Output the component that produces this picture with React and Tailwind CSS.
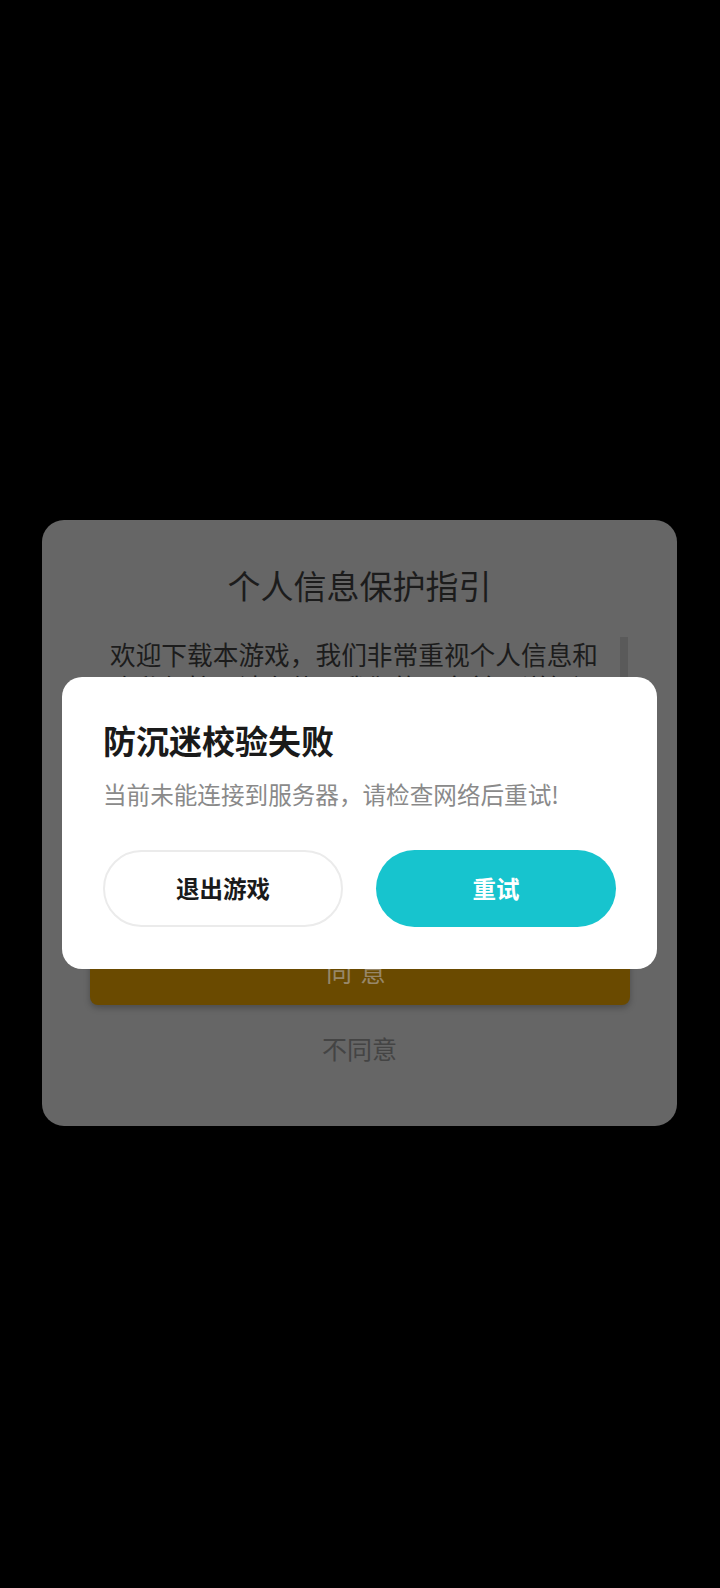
import React from 'react';

// only the two lines that show above the dialog
const bodyText = '欢迎下载本游戏，我们非常重视个人信息和隐私保护，请在使用我们的服务前，详细阅';

// Privacy guide card dimmed behind the anti-addiction error dialog
const App = () => {
  return (
    <div className="relative w-[720px] h-[1588px] bg-black overflow-hidden font-['Noto_Sans_CJK_SC',sans-serif]">
      <div className="relative mt-[520px] ml-[42px] w-[635px] h-[606px] rounded-[22px] bg-[#666666] flex flex-col">
        <h2 className="mt-[43px] text-center text-[33px] leading-[44px] text-[#1c1c1c]">
          个人信息保护指引
        </h2>

        <div className="relative mt-[30px] h-[280px] overflow-hidden">
          <p className="ml-[68px] w-[490px] text-[25.7px] leading-[33px] text-[#1c1c1c]">
            {bodyText}
          </p>
          <div className="absolute left-[578px] top-[-6px] w-[8px] h-[90px] rounded-full bg-[#5a5a5a]" />
        </div>

        <button className="mt-[18px] ml-[48px] w-[540px] h-[70px] rounded-[8px] bg-[#6a4a00] shadow-[0_3px_6px_rgba(0,0,0,0.25)] text-[26px] text-[#978769] tracking-[8px]">
          同意
        </button>

        <div className="mt-[25px] text-center text-[25px] leading-[36px] text-[#444444]">
          不同意
        </div>

        {/* error dialog */}
        <div className="absolute left-[20px] top-[157px] w-[595px] h-[292px] rounded-[20px] bg-white px-[41px] pt-[43px]">
          <h3 className="text-[33px] leading-[40px] font-bold text-[#1a1a1a]">
            防沉迷校验失败
          </h3>
          <p className="mt-[18px] text-[23.6px] leading-[32px] text-[#8a8a8a]">
            当前未能连接到服务器，请检查网络后重试!
          </p>
          <div className="mt-[40px] flex gap-[33px]">
            <button className="w-[241px] h-[77px] rounded-full border-2 border-[#ebebeb] bg-white text-[23.5px] font-bold text-[#1a1a1a]">
              退出游戏
            </button>
            <button className="w-[241px] h-[77px] rounded-full bg-[#17c4ce] text-[23.5px] font-bold text-white">
              重试
            </button>
          </div>
        </div>
      </div>
    </div>
  );
};

export default App;
